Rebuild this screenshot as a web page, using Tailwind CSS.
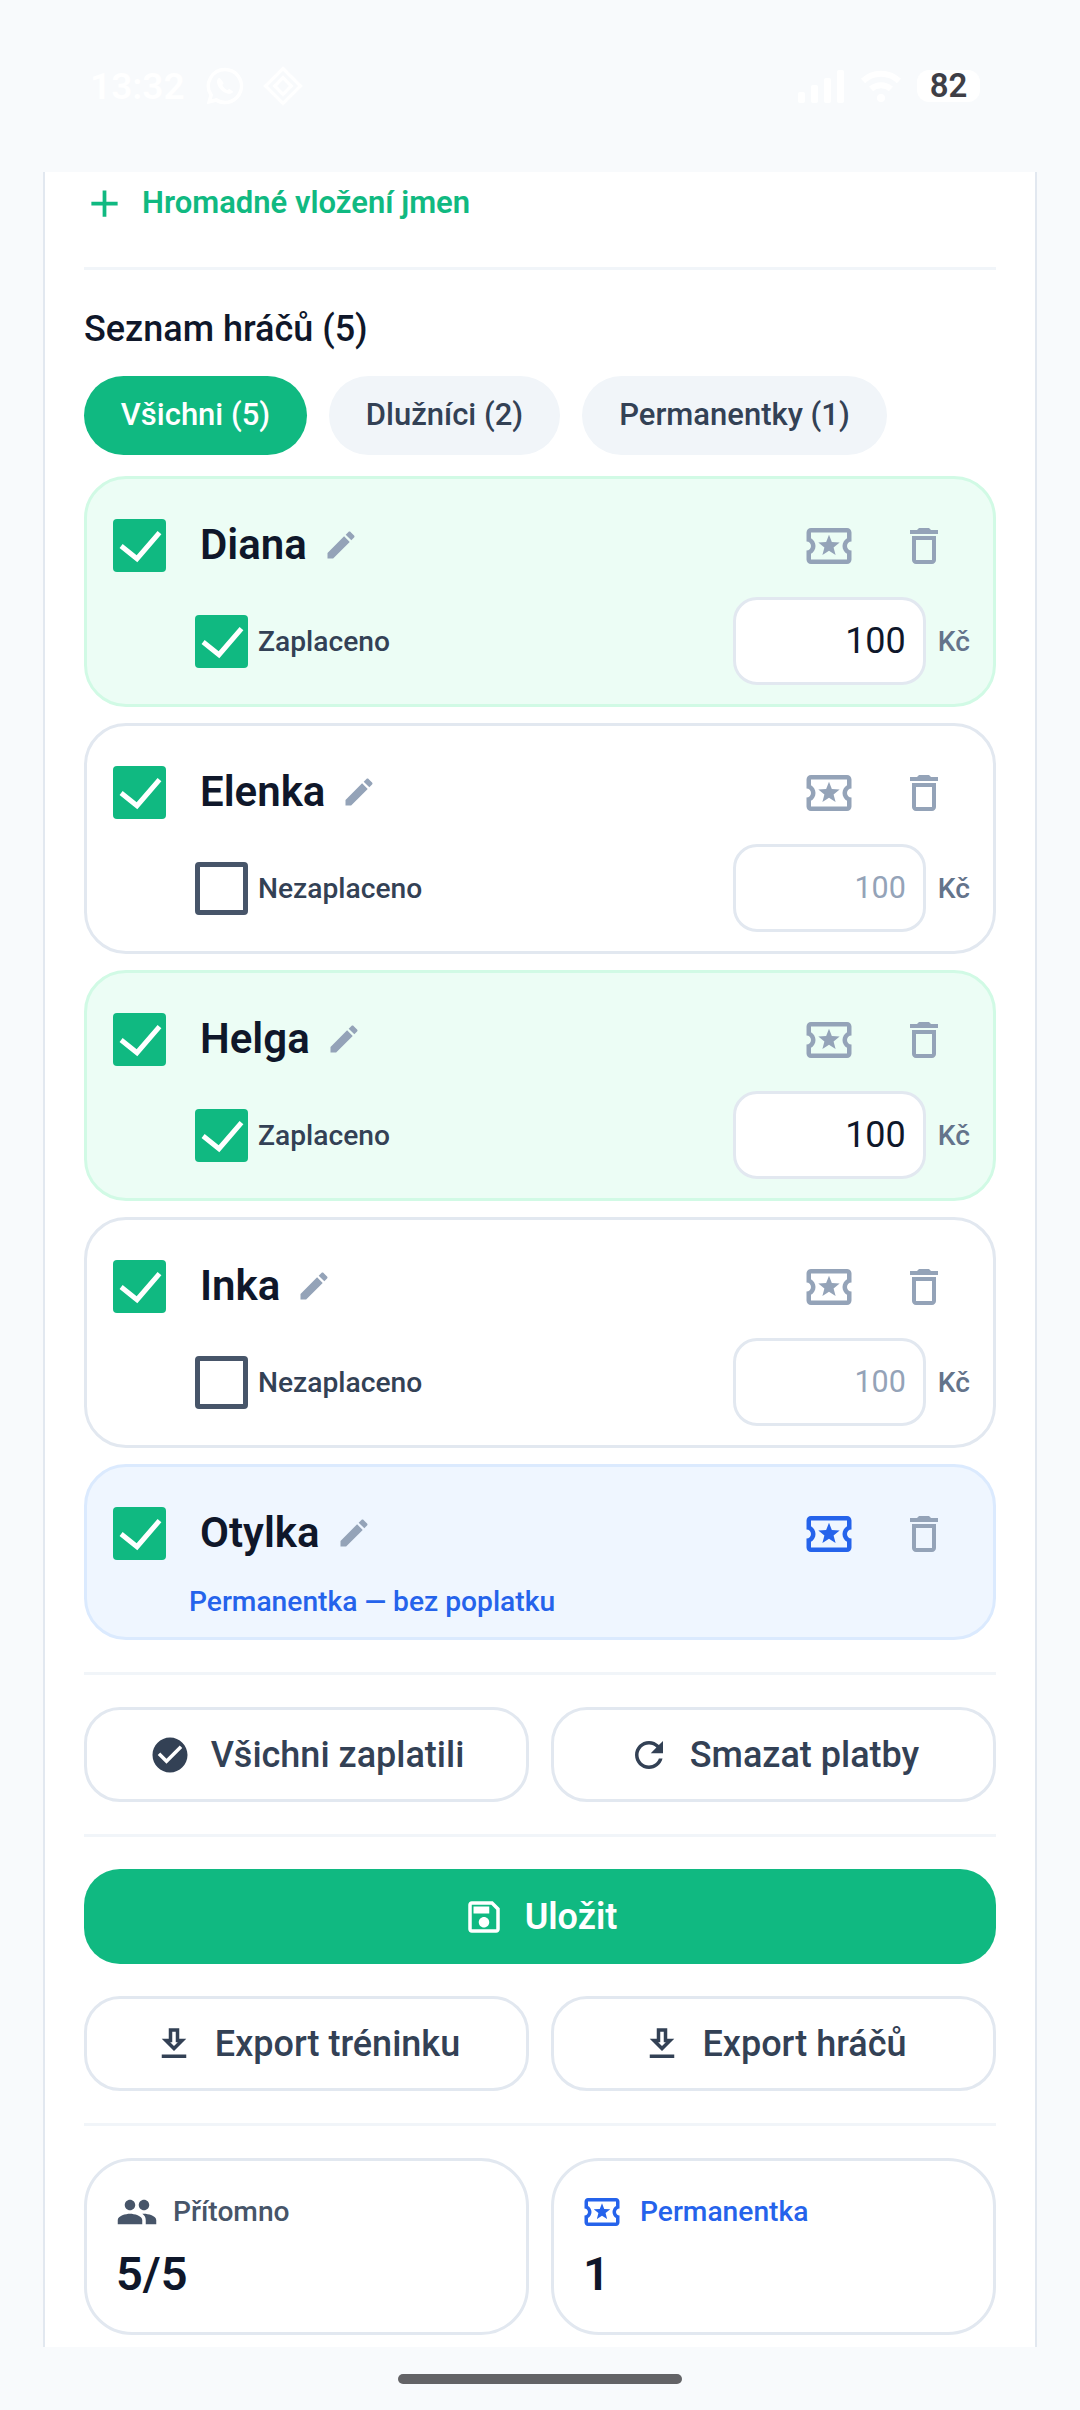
<!DOCTYPE html>
<html lang="cs">
<head>
  <meta charset="UTF-8" />
  <title>Seznam hráčů</title>
  <script src="https://cdn.jsdelivr.net/npm/@tailwindcss/browser@4"></script>
</head>
<body class="bg-[#f8fafc] font-['Roboto',sans-serif] w-[1080px] h-[2410px] overflow-hidden">
  <!-- icon set -->
  <svg class="hidden">
    <symbol id="i-edit" viewBox="0 0 24 24"><path fill="currentColor" d="M3 17.25V21h3.75L17.81 9.94l-3.75-3.75L3 17.25zM20.71 7.04c.39-.39.39-1.02 0-1.41l-2.34-2.34c-.39-.39-1.02-.39-1.41 0l-1.83 1.83 3.75 3.75 1.83-1.83z"/></symbol>
    <symbol id="i-ticket" viewBox="0 0 24 24"><path fill="currentColor" d="M22 10V6c0-1.11-.9-2-2-2H4c-1.1 0-1.99.89-1.99 2v4c1.1 0 1.99.9 1.99 2s-.89 2-2 2v4c0 1.1.9 2 2 2h16c1.1 0 2-.9 2-2v-4c-1.1 0-2-.9-2-2s.9-2 2-2zm-2-1.46c-1.19.69-2 1.99-2 3.46s.81 2.77 2 3.46V18H4v-2.54c1.19-.69 2-1.99 2-3.46 0-1.48-.8-2.77-1.99-3.46L4 6h16v2.54zM9.07 16L12 14.12 14.93 16l-.89-3.36 2.69-2.2-3.47-.21L12 7l-1.27 3.22-3.47.21 2.69 2.2z"/></symbol>
    <symbol id="i-trash" viewBox="0 0 24 24"><path fill="currentColor" d="M6 19c0 1.1.9 2 2 2h8c1.1 0 2-.9 2-2V7H6v12zM8 9h8v10H8V9zm7.5-5l-1-1h-5l-1 1H5v2h14V4h-3.5z"/></symbol>
    <symbol id="i-check" viewBox="0 0 52 53"><polyline points="7.6,27 23.5,39.7 46,13.6" fill="none" stroke="white" stroke-width="5"/></symbol>
    <symbol id="i-download" viewBox="0 0 24 24"><path fill="currentColor" d="M19 9h-4V3H9v6H5l7 7 7-7zm-8 2V5h2v6h1.17L12 13.17 9.83 11H11zm-6 7h14v2H5z"/></symbol>
  </svg>

  <!-- status bar -->
  <div class="h-[172px] flex items-start justify-between pl-[90px] pr-[100px] pt-[64px]">
    <div class="flex items-center h-[44px] gap-[22px] text-white">
      <span class="text-[37px] font-semibold leading-none">13:32</span>
      <svg class="w-[44px] h-[44px] -ml-[4px]" viewBox="0 0 24 24"><path fill="currentColor" d="M12 2a10 10 0 0 0-8.6 15.1L2 22l5-1.3A10 10 0 1 0 12 2zm0 2a8 8 0 1 1-4.3 14.7l-.4-.2-2.5.7.7-2.4-.3-.4A8 8 0 0 1 12 4zM8.800 7.500c-.9.6-1.400 1.600-1.100 2.900.6 2.800 3.100 5.200 5.900 5.800 1.200.2 2.300-.2 2.900-1.100l-2.200-1.600-1 .8c-1.200-.5-2.300-1.600-2.800-2.800l.8-1-1.500-2.200z"/></svg>
      <svg class="w-[40px] h-[40px] -ml-[6px]" viewBox="0 0 24 24"><path fill="none" stroke="currentColor" stroke-width="2" d="M12 1.500 22.500 12 12 22.500 1.500 12zM12 7l5 5-5 5-5-5z"/></svg>
    </div>
    <div class="flex items-center h-[44px]">
      <svg class="w-[48px] h-[33px]" viewBox="0 0 48 33"><g fill="white"><rect x="0" y="22" width="7" height="11" rx="2"/><rect x="13" y="15" width="7" height="18" rx="2"/><rect x="26" y="8" width="7" height="25" rx="2"/><rect x="39" y="0" width="7" height="33" rx="2"/></g></svg>
      <svg class="w-[42px] h-[36px] ml-[14px]" viewBox="0 0 42 36"><path fill="none" stroke="white" stroke-width="6" d="M3 13a26 26 0 0 1 36 0M11 21a15 15 0 0 1 20 0"/><circle cx="21" cy="30" r="4" fill="white"/></svg>
      <span class="ml-[15px] w-[63px] h-[32px] rounded-[12px] bg-white flex items-center justify-center text-[33px] font-semibold text-[#3f3f46]">82</span>
    </div>
  </div>

  <!-- panel -->
  <main class="ml-[43px] w-[994px] h-[2175px] overflow-hidden border-x-2 border-[#e2e8f0] bg-white px-[39px]">
    <div class="h-[95px] flex items-start pt-[8px]">
      <div class="flex items-center h-[46px] text-[#10b981]">
        <svg class="w-[45px] h-[45px] ml-[-2px]" viewBox="0 0 24 24"><path fill="currentColor" d="M19 13h-6v6h-2v-6H5v-2h6V5h2v6h6v2z"/></svg>
        <span class="ml-[15px] text-[31px] font-semibold">Hromadné vložení jmen</span>
      </div>
    </div>
    <div class="h-[3px] bg-[#f1f5f9]"></div>

    <h2 class="mt-[36px] h-[45px] flex items-center text-[36px] font-medium text-[#0f172a]">Seznam hráčů (5)</h2>

    <div class="mt-[25px] flex gap-[22px] text-[31px] font-medium">
      <span class="h-[79px] w-[223px] flex items-center justify-center rounded-full bg-[#10b981] text-white">Všichni (5)</span>
      <span class="h-[79px] w-[231px] flex items-center justify-center rounded-full bg-[#f1f5f9] text-[#334155]">Dlužníci (2)</span>
      <span class="h-[79px] w-[305px] flex items-center justify-center rounded-full bg-[#f1f5f9] text-[#334155]">Permanentky (1)</span>
    </div>

    <div class="mt-[21px] flex flex-col gap-[16px]">
      <!-- Diana -->
      <div class="h-[231px] rounded-[42px] border-[3px] border-[#d1fae5] bg-[#ecfdf5] pt-[40px] pl-[26px] pr-[23px]">
        <div class="flex items-center h-[53px]">
          <span class="w-[53px] h-[53px] rounded-[4px] bg-[#10b981]"><svg class="w-[53px] h-[53px]"><use href="#i-check"/></svg></span>
          <span class="ml-[34px] -mt-[2px] text-[42px] font-semibold text-[#0f172a]">Diana</span>
          <svg class="ml-[16px] -mt-[2px] w-[36px] h-[36px] text-[#94a3b8]"><use href="#i-edit"/></svg>
          <svg class="ml-auto w-[54px] h-[54px] text-[#94a3b8]"><use href="#i-ticket"/></svg>
          <svg class="ml-[44px] mr-[22px] w-[48px] h-[48px] text-[#94a3b8]"><use href="#i-trash"/></svg>
        </div>
        <div class="mt-[25px] flex items-center h-[88px]">
          <span class="ml-[82px] w-[53px] h-[53px] rounded-[4px] bg-[#10b981]"><svg class="w-[53px] h-[53px]"><use href="#i-check"/></svg></span>
          <span class="ml-[10px] mt-[2px] text-[28.2px] font-medium text-[#334155]">Zaplaceno</span>
          <span class="ml-auto w-[193px] h-[88px] flex items-center justify-end rounded-[24px] border-[3px] border-[#e2e8f0] bg-white pr-[17px] text-[36px] text-[#0f172a]">100</span>
          <span class="ml-[12px] mt-[2px] text-[28.2px] font-medium text-[#64748b]">Kč</span>
        </div>
      </div>
      <!-- Elenka -->
      <div class="h-[231px] rounded-[42px] border-[3px] border-[#e2e8f0] bg-white pt-[40px] pl-[26px] pr-[23px]">
        <div class="flex items-center h-[53px]">
          <span class="w-[53px] h-[53px] rounded-[4px] bg-[#10b981]"><svg class="w-[53px] h-[53px]"><use href="#i-check"/></svg></span>
          <span class="ml-[34px] -mt-[2px] text-[42px] font-semibold text-[#0f172a]">Elenka</span>
          <svg class="ml-[16px] -mt-[2px] w-[36px] h-[36px] text-[#94a3b8]"><use href="#i-edit"/></svg>
          <svg class="ml-auto w-[54px] h-[54px] text-[#94a3b8]"><use href="#i-ticket"/></svg>
          <svg class="ml-[44px] mr-[22px] w-[48px] h-[48px] text-[#94a3b8]"><use href="#i-trash"/></svg>
        </div>
        <div class="mt-[25px] flex items-center h-[88px]">
          <span class="ml-[82px] w-[53px] h-[53px] rounded-[4px] border-[5px] border-[#475569]"></span>
          <span class="ml-[10px] mt-[2px] text-[28.2px] font-medium text-[#334155]">Nezaplaceno</span>
          <span class="ml-auto w-[193px] h-[88px] flex items-center justify-end rounded-[24px] border-[3px] border-[#e2e8f0] bg-white pr-[17px] text-[30.5px] text-[#94a3b8]">100</span>
          <span class="ml-[12px] mt-[2px] text-[28.2px] font-medium text-[#64748b]">Kč</span>
        </div>
      </div>
      <!-- Helga -->
      <div class="h-[231px] rounded-[42px] border-[3px] border-[#d1fae5] bg-[#ecfdf5] pt-[40px] pl-[26px] pr-[23px]">
        <div class="flex items-center h-[53px]">
          <span class="w-[53px] h-[53px] rounded-[4px] bg-[#10b981]"><svg class="w-[53px] h-[53px]"><use href="#i-check"/></svg></span>
          <span class="ml-[34px] -mt-[2px] text-[42px] font-semibold text-[#0f172a]">Helga</span>
          <svg class="ml-[16px] -mt-[2px] w-[36px] h-[36px] text-[#94a3b8]"><use href="#i-edit"/></svg>
          <svg class="ml-auto w-[54px] h-[54px] text-[#94a3b8]"><use href="#i-ticket"/></svg>
          <svg class="ml-[44px] mr-[22px] w-[48px] h-[48px] text-[#94a3b8]"><use href="#i-trash"/></svg>
        </div>
        <div class="mt-[25px] flex items-center h-[88px]">
          <span class="ml-[82px] w-[53px] h-[53px] rounded-[4px] bg-[#10b981]"><svg class="w-[53px] h-[53px]"><use href="#i-check"/></svg></span>
          <span class="ml-[10px] mt-[2px] text-[28.2px] font-medium text-[#334155]">Zaplaceno</span>
          <span class="ml-auto w-[193px] h-[88px] flex items-center justify-end rounded-[24px] border-[3px] border-[#e2e8f0] bg-white pr-[17px] text-[36px] text-[#0f172a]">100</span>
          <span class="ml-[12px] mt-[2px] text-[28.2px] font-medium text-[#64748b]">Kč</span>
        </div>
      </div>
      <!-- Inka -->
      <div class="h-[231px] rounded-[42px] border-[3px] border-[#e2e8f0] bg-white pt-[40px] pl-[26px] pr-[23px]">
        <div class="flex items-center h-[53px]">
          <span class="w-[53px] h-[53px] rounded-[4px] bg-[#10b981]"><svg class="w-[53px] h-[53px]"><use href="#i-check"/></svg></span>
          <span class="ml-[34px] -mt-[2px] text-[42px] font-semibold text-[#0f172a]">Inka</span>
          <svg class="ml-[16px] -mt-[2px] w-[36px] h-[36px] text-[#94a3b8]"><use href="#i-edit"/></svg>
          <svg class="ml-auto w-[54px] h-[54px] text-[#94a3b8]"><use href="#i-ticket"/></svg>
          <svg class="ml-[44px] mr-[22px] w-[48px] h-[48px] text-[#94a3b8]"><use href="#i-trash"/></svg>
        </div>
        <div class="mt-[25px] flex items-center h-[88px]">
          <span class="ml-[82px] w-[53px] h-[53px] rounded-[4px] border-[5px] border-[#475569]"></span>
          <span class="ml-[10px] mt-[2px] text-[28.2px] font-medium text-[#334155]">Nezaplaceno</span>
          <span class="ml-auto w-[193px] h-[88px] flex items-center justify-end rounded-[24px] border-[3px] border-[#e2e8f0] bg-white pr-[17px] text-[30.5px] text-[#94a3b8]">100</span>
          <span class="ml-[12px] mt-[2px] text-[28.2px] font-medium text-[#64748b]">Kč</span>
        </div>
      </div>
      <!-- Otylka -->
      <div class="h-[176px] rounded-[42px] border-[3px] border-[#dbeafe] bg-[#eff6ff] pt-[40px] pl-[26px] pr-[23px]">
        <div class="flex items-center h-[53px]">
          <span class="w-[53px] h-[53px] rounded-[4px] bg-[#10b981]"><svg class="w-[53px] h-[53px]"><use href="#i-check"/></svg></span>
          <span class="ml-[34px] -mt-[2px] text-[42px] font-semibold text-[#0f172a]">Otylka</span>
          <svg class="ml-[16px] -mt-[2px] w-[36px] h-[36px] text-[#94a3b8]"><use href="#i-edit"/></svg>
          <svg class="ml-auto w-[54px] h-[54px] text-[#2563eb]"><use href="#i-ticket"/></svg>
          <svg class="ml-[44px] mr-[22px] w-[48px] h-[48px] text-[#94a3b8]"><use href="#i-trash"/></svg>
        </div>
        <div class="mt-[22px] ml-[76px] h-[40px] flex items-center text-[28.2px] font-medium text-[#2563eb]">Permanentka — bez poplatku</div>
      </div>
    </div>

    <div class="mt-[32px] h-[3px] bg-[#f1f5f9]"></div>

    <div class="mt-[32px] grid grid-cols-2 gap-[22px]">
      <button class="h-[95px] flex items-center justify-center gap-[20px] rounded-[36px] border-[3px] border-[#e2e8f0] bg-white text-[36px] font-medium text-[#334155]">
        <svg class="w-[42px] h-[42px]" viewBox="0 0 24 24"><path fill="currentColor" d="M12 2C6.48 2 2 6.48 2 12s4.480 10 10 10 10-4.480 10-10S17.520 2 12 2zm-2 15l-5-5 1.410-1.410L10 14.170l7.590-7.590L19 8l-9 9z"/></svg>
        Všichni zaplatili
      </button>
      <button class="h-[95px] flex items-center justify-center gap-[20px] rounded-[36px] border-[3px] border-[#e2e8f0] bg-white text-[36px] font-medium text-[#334155]">
        <svg class="w-[42px] h-[42px]" viewBox="0 0 24 24"><path fill="currentColor" d="M17.65 6.35C16.2 4.9 14.21 4 12 4c-4.42 0-7.99 3.58-7.99 8s3.57 8 7.99 8c3.73 0 6.84-2.55 7.73-6h-2.08c-.82 2.33-3.04 4-5.65 4-3.31 0-6-2.69-6-6s2.69-6 6-6c1.66 0 3.14.69 4.22 1.78L13 11h7V4l-2.35 2.35z"/></svg>
        Smazat platby
      </button>
    </div>

    <div class="mt-[32px] h-[3px] bg-[#f1f5f9]"></div>

    <button class="mt-[32px] w-full h-[95px] flex items-center justify-center gap-[20px] rounded-[36px] bg-[#10b981] text-[36px] font-semibold text-white">
      <svg class="w-[42px] h-[42px]" viewBox="0 0 24 24"><path fill="currentColor" d="M17 3H5c-1.11 0-2 .9-2 2v14c0 1.1.89 2 2 2h14c1.100 0 2-.9 2-2V7l-4-4zm2 16H5V5h11.170L19 7.830V19zm-7-7c-1.660 0-3 1.340-3 3s1.340 3 3 3 3-1.340 3-3-1.340-3-3-3zM6 6h9v4H6z"/></svg>
      Uložit
    </button>

    <div class="mt-[32px] grid grid-cols-2 gap-[22px]">
      <button class="h-[95px] flex items-center justify-center gap-[20px] rounded-[36px] border-[3px] border-[#e2e8f0] bg-white text-[36px] font-medium text-[#334155]">
        <svg class="w-[42px] h-[42px]"><use href="#i-download"/></svg>
        Export tréninku
      </button>
      <button class="h-[95px] flex items-center justify-center gap-[20px] rounded-[36px] border-[3px] border-[#e2e8f0] bg-white text-[36px] font-medium text-[#334155]">
        <svg class="w-[42px] h-[42px]"><use href="#i-download"/></svg>
        Export hráčů
      </button>
    </div>

    <div class="mt-[32px] h-[3px] bg-[#f1f5f9]"></div>

    <div class="mt-[32px] grid grid-cols-2 gap-[22px]">
      <div class="h-[177px] rounded-[48px] border-[3px] border-[#e2e8f0] bg-white pl-[29px] pt-[30px]">
        <div class="flex items-center h-[42px] gap-[15px] text-[28.2px] font-medium text-[#475569]">
          <svg class="w-[42px] h-[42px]" viewBox="0 0 24 24"><path fill="currentColor" d="M16 11c1.66 0 2.99-1.34 2.99-3S17.66 5 16 5c-1.66 0-3 1.34-3 3s1.34 3 3 3zm-8 0c1.66 0 2.99-1.34 2.99-3S9.66 5 8 5C6.34 5 5 6.34 5 8s1.34 3 3 3zm0 2c-2.33 0-7 1.17-7 3.5V19h14v-2.5c0-2.33-4.67-3.5-7-3.5zm8 0c-.29 0-.62.02-.97.05 1.16.84 1.97 1.97 1.97 3.45V19h6v-2.5c0-2.33-4.67-3.5-7-3.5z"/></svg>
          Přítomno
        </div>
        <div class="mt-[11px] text-[47px] font-semibold leading-[60px] text-[#0f172a]">5/5</div>
      </div>
      <div class="h-[177px] rounded-[48px] border-[3px] border-[#e2e8f0] bg-white pl-[29px] pt-[30px]">
        <div class="flex items-center h-[42px] gap-[17px] text-[28.2px] font-medium text-[#2563eb]">
          <svg class="w-[42px] h-[42px] -ml-[2px]"><use href="#i-ticket"/></svg>
          Permanentka
        </div>
        <div class="mt-[11px] text-[47px] font-semibold leading-[60px] text-[#0f172a]">1</div>
      </div>
    </div>
  </main>

  <!-- home indicator -->
  <div class="mt-[27px] mx-auto w-[284px] h-[10px] rounded-full bg-[#636366]"></div>
</body>
</html>
